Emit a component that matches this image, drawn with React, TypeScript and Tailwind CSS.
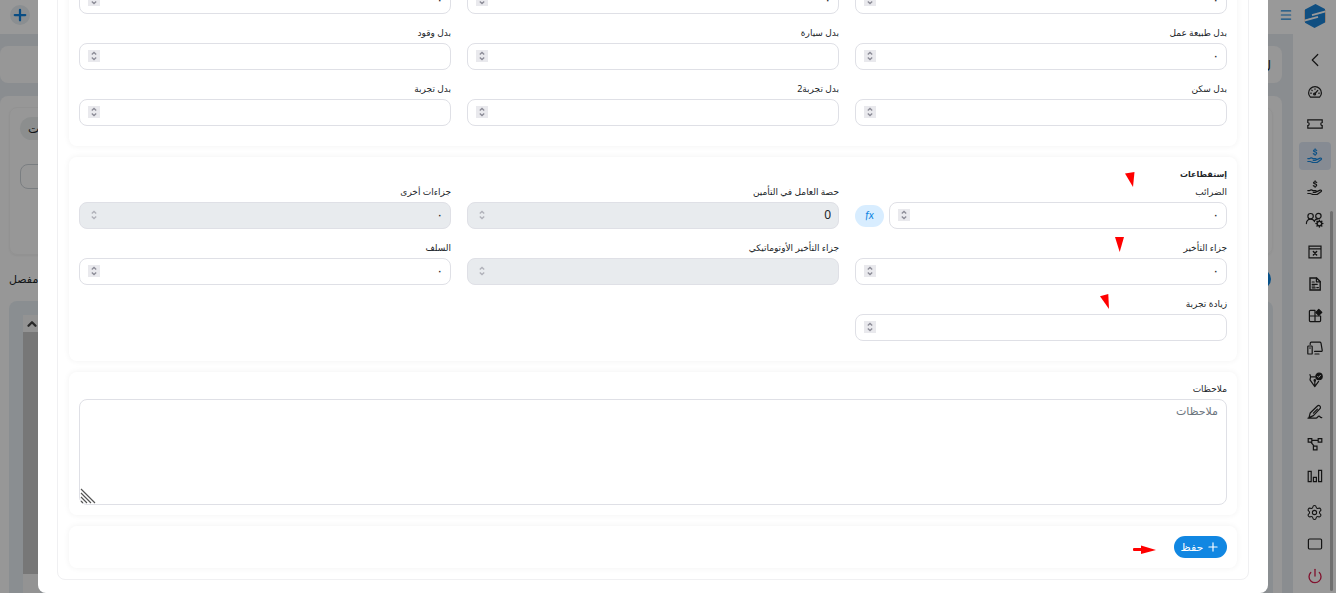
import type { ReactNode } from 'react'
import { ChevronLeft, ChevronUp, Menu, Plus, Power, Settings } from 'lucide-react'
import clsx from 'clsx'

function Svg({ children }: { children: ReactNode }) {
  return (
    <svg
      viewBox="0 0 16 16"
      className="w-4 h-4 overflow-visible"
      fill="none"
      stroke="currentColor"
      strokeWidth="1.2"
      strokeLinecap="round"
      strokeLinejoin="round"
      aria-hidden="true"
    >
      {children}
    </svg>
  )
}

function HandDollar() {
  return (
    <Svg>
      <path d="M9.7 2.4C9.2 1.9 8.6 1.8 8 1.8c-.9 0-1.5.4-1.5 1 0 1.5 3.2.8 3.2 2.4 0 .7-.7 1.1-1.6 1.1-.7 0-1.4-.2-1.8-.7M8.1.8v1M8.1 6.3v1" />
      <path d="M.8 10.6h1.8c1-.9 2.4-.8 3.4.1h2.4c1.2 0 1.2 1.6 0 1.6H6.2M9.2 11.9l4-1.8c1-.4 1.8.7 1 1.4l-3.4 2.6c-.4.3-.8.4-1.3.4H6.4c-1.4 0-2-.8-3.2-1H.8" />
    </Svg>
  )
}

function Gauge() {
  return (
    <Svg>
      <path d="M3.4 13.2h9.2c1.1-1.1 1.8-2.5 1.8-4.2a6.4 6.4 0 0 0-12.8 0c0 1.7.7 3.1 1.8 4.2Z" />
      <path d="m7.6 10 3.2-3.6M3.7 9.2h.6M4.8 6.2l.4.4M8 4.8v.5M12.3 9.2h-.6" />
      <circle cx="7.6" cy="10" r="1" />
    </Svg>
  )
}

function Ticket() {
  return (
    <Svg>
      <path
        d="M.8 3.8h14.4v2.6c-1 .2-1.4.8-1.4 1.6s.4 1.4 1.4 1.6v2.6H.8V9.6c1-.2 1.4-.8 1.4-1.6S1.8 6.6.8 6.4Z"
        strokeLinejoin="miter"
      />
    </Svg>
  )
}

function UsersCog() {
  return (
    <Svg>
      <circle cx="3.6" cy="4.2" r="2.7" />
      <circle cx="11.4" cy="4" r="2.7" />
      <path d="M-.6 11.6c0-2.6 1.6-4.4 4.2-4.4 2 0 3.3 1 3.9 2.4M7.5 8.8C8.1 7.4 9.5 6.8 11 6.8" />
      <circle cx="12.4" cy="11.6" r="2.3" />
      <path
        d="M12.4 8.2v1M12.4 14v1M9 11.6h1M14.8 11.6h1M10 9.2l.7.7M14.8 9.2l-.7.7M10 14l.7-.7M14.8 14l-.7-.7"
        strokeWidth="1.5"
      />
    </Svg>
  )
}

function WindowX() {
  return (
    <Svg>
      <path d="M2 2.2h12v11.6H2ZM2 4.8h12" strokeLinejoin="miter" />
      <path d="m6.4 7.6 3.2 3.4M9.6 7.6l-3.2 3.4" strokeWidth="1.5" />
    </Svg>
  )
}

function FileText() {
  return (
    <Svg>
      <path d="M3 2h6.6l3.6 3.6V14H3Z" strokeLinejoin="miter" strokeWidth="1.4" />
      <path d="M9.4 2v3.8h3.8M5.2 6h2M5.2 8.4h5M5.2 10h2.4M5.2 11.8h3M9.8 11.6h1.6" />
    </Svg>
  )
}

function GridPlus() {
  return (
    <Svg>
      <path d="M8 2.4H3.4c-.6 0-1 .4-1 1v9.2c0 .6.4 1 1 1h9.2c.6 0 1-.4 1-1V8H2.4M8 2.4v11.2" />
      <path d="m11.8 1.4 3 3-3 3-3-3Z" fill="currentColor" />
    </Svg>
  )
}

function Devices() {
  return (
    <Svg>
      <path d="M3.2 4.6V3.4c0-.8.4-1.2 1.2-1.2h8.4c.7 0 1 .3 1.2 1l1.2 7c.1.8-.2 1.2-1 1.2H7.6M8 14h4" />
      <rect x=".8" y="6" width="4.4" height="8" rx=".6" />
      <path d="M2.6 8h.8" />
    </Svg>
  )
}

function PenCheck() {
  return (
    <Svg>
      <path d="m3 2.6.6 2.2h4.2M3.6 4.8 3 7.8l4.8 6.8 3.8-5.2M7.8 14.4V9" />
      <circle cx="7.8" cy="8.4" r=".7" />
      <circle cx="12" cy="4.4" r="3.2" fill="currentColor" />
      <path d="m10.6 4.4 1 1 1.8-2" stroke="#ffffff" strokeWidth="1" />
    </Svg>
  )
}

function PenSign() {
  return (
    <Svg>
      <path d="M2 13.6 3.2 9l7.2-7c.6-.6 2-.4 2.600.2s.6 1.800 0 2.400l-6.600 7L2 13.600ZM6.400 9.200l4-4M1 14.200h8c1.600 0 1.600-2 3-2s.8 1.800 2.800 1.400" />
    </Svg>
  )
}

function Nodes() {
  return (
    <Svg>
      <path
        d="M1.2 2.6h3.600v3.600H1.200ZM11.200 2.600h3.600v3.600h-3.600ZM6.400 10.200H10v3.600H6.400ZM4.800 4.400h6.400M3.800 6.200l3.400 4"
        strokeLinejoin="miter"
      />
    </Svg>
  )
}

function Bars() {
  return (
    <Svg>
      <path d="M1.2 3.4h3v10.200h-3ZM6.400 9.400h3v4.200h-3ZM11.600 2.400h3v11.200h-3Z" strokeLinejoin="miter" />
    </Svg>
  )
}

function Screen() {
  return (
    <Svg>
      <rect x="1.4" y="3" width="13.2" height="10" rx="1.2" />
    </Svg>
  )
}

function Logo() {
  return (
    <svg viewBox="0 0 22 24" className="w-[22px] h-6" aria-hidden="true">
      <path d="M.5 6h2v13l-2-1ZM21.5 6h-2v12l2 .500Z" fill="#f0b48a" />
      <path d="M11.500 0 21 5v2.500L10 11.500l11-3.500v10.500L10.500 24 1 18.800v-2.300l11-4L1 16V5.500Z" fill="#1c84d8" />
      <path d="M21.500 7.300 8 11.200M.5 16.700 14 12.800" stroke="#ffffff" strokeWidth="1.8" />
    </svg>
  )
}

const NAV: { label: string; icon: ReactNode; active?: boolean }[] = [
  { label: 'رجوع', icon: <ChevronLeft size={22} strokeWidth={1.3} /> },
  { label: 'لوحة التحكم', icon: <Gauge /> },
  { label: 'التذاكر', icon: <Ticket /> },
  { label: 'الرواتب', icon: <HandDollar />, active: true },
  { label: 'المدفوعات', icon: <HandDollar /> },
  { label: 'الموظفون', icon: <UsersCog /> },
  { label: 'الغياب', icon: <WindowX /> },
  { label: 'المستندات', icon: <FileText /> },
  { label: 'التطبيقات', icon: <GridPlus /> },
  { label: 'الأجهزة', icon: <Devices /> },
  { label: 'الموافقات', icon: <PenCheck /> },
  { label: 'التوقيع', icon: <PenSign /> },
  { label: 'الهيكل', icon: <Nodes /> },
  { label: 'التقارير', icon: <Bars /> },
]

function Sidebar() {
  return (
    <aside className="relative w-[43px] shrink-0 bg-white flex flex-col items-center">
      <div className="h-[46px] pt-1">
        <Logo />
      </div>
      <nav className="flex flex-col gap-1">
        {NAV.map((n) => (
          <a
            key={n.label}
            href="#"
            aria-label={n.label}
            className={clsx(
              'w-8 h-7 rounded-sm flex items-center justify-center',
              n.active ? 'bg-[#dfe8f5] text-[#1788e0]' : 'text-[#222222]',
            )}
          >
            {n.icon}
          </a>
        ))}
      </nav>
      <div className="mt-2 flex flex-col gap-1 text-[#222222]">
        <button aria-label="الإعدادات" className="w-8 h-7 flex items-center justify-center">
          <Settings size={17} strokeWidth={1.5} />
        </button>
        <button aria-label="الشاشة" className="w-8 h-7 flex items-center justify-center">
          <Screen />
        </button>
        <button aria-label="خروج" className="w-8 h-7 flex items-center justify-center text-[#d8204f]">
          <Power size={16} strokeWidth={2} />
        </button>
      </div>
      <div className="absolute right-[3px] top-[211px] bottom-[2px] w-[3px] rounded-full bg-[#bbbbbb]" />
    </aside>
  )
}

function Backdrop() {
  return (
    <div className="h-screen flex overflow-hidden bg-[#e7ebf0]" aria-hidden="true">
      <Sidebar />
      <main className="flex-1 min-w-0 flex flex-col">
        <header className="h-[34px] shrink-0 bg-white flex items-center justify-between pl-[10px] pb-1">
          <button className="text-[#1788e0]">
            <Menu size={14} strokeWidth={2} />
          </button>
          <button className="w-5 h-5 rounded-full bg-[#e6edf2] text-[#0d7fdc] flex items-center justify-center">
            <Plus size={18} strokeWidth={3} />
          </button>
        </header>
        <div className="mt-3 h-[37px] shrink-0 mr-[11px] rounded-lg bg-[#fcfcfc] flex items-center pr-[11px] text-[12px]">
          ل
        </div>
        <div className="mt-[13px] flex-1 mr-[11px] rounded-t-lg bg-[#fcfcfc] px-[9px] pt-[11px] flex flex-col">
          <div className="h-[148px] shrink-0 rounded-lg border border-[#f3f3f3] shadow-xs px-[10px] pt-[9px] flex flex-col items-end gap-6">
            <span className="h-[23px] w-20 rounded-full bg-[#e9eded] flex items-center justify-end pl-2 text-[12px]">
              البيانات
            </span>
            <span className="h-[25px] w-40 rounded-lg border border-[#ccd2d8]" />
          </div>
          <div className="mt-[14px] h-5 shrink-0 flex items-center justify-between pr-[2px] text-[11px]">
            <span className="w-5 h-5 rounded-full bg-[#0d86e3]" />
            <span>مفصل</span>
          </div>
          <div className="mt-[12px] flex-1 rounded-t-lg bg-[#e6edf2] pt-[14px] pl-[14px] flex flex-col items-end">
            <span className="h-[17px] w-[17px] bg-[#f6f6f6] flex items-center justify-center text-[#444444]">
              <ChevronUp size={14} strokeWidth={4} />
            </span>
            <span className="h-[242px] w-[17px] bg-[#c6c6c6]" />
            <span className="flex-1 w-[17px] bg-[#f6f6f6]" />
          </div>
        </div>
      </main>
    </div>
  )
}

function Spinner({ disabled }: { disabled?: boolean }) {
  return (
    <span
      className={clsx(
        'w-3 h-3 shrink-0 flex items-center justify-center text-[#8b8b96]',
        disabled ? 'opacity-60' : 'bg-[#e9e9ed]',
      )}
    >
      <svg viewBox="0 0 12 12" className="w-3 h-3" fill="none" stroke="currentColor" strokeWidth="1.3" aria-hidden="true">
        <path d="m3.8 4.4 2.2-2 2.2 2M3.8 7.6l2.2 2 2.2-2" />
      </svg>
    </span>
  )
}

function Arrow({ points, className }: { points: string; className: string }) {
  return (
    <svg viewBox="0 0 10 15" className={clsx('absolute w-[10px] h-[15px]', className)} aria-hidden="true">
      <polygon points={points} fill="#ff0000" />
    </svg>
  )
}

type FieldProps = {
  id: string
  label: string
  value?: string
  disabled?: boolean
  formula?: boolean
  children?: ReactNode
}

function Field({ id, label, value = '', disabled, formula, children }: FieldProps) {
  return (
    <div className="relative mb-3">
      <label htmlFor={id} className="block h-[17px] leading-[14px] text-[9px]">
        {label}
      </label>
      <div className="flex items-center gap-[5px]">
        <div
          className={clsx(
            'flex-1 min-w-0 h-[27px] rounded-lg border border-[#dfe0e6] flex items-center pr-[7px] pl-2 pb-px',
            disabled ? 'bg-[#e8ebee]' : 'bg-white',
          )}
        >
          <input
            id={id}
            type="text"
            inputMode="numeric"
            defaultValue={value}
            disabled={disabled}
            className="flex-1 min-w-0 bg-transparent outline-none text-[12px] text-[#212529]"
          />
          <Spinner disabled={disabled} />
        </div>
        {formula && (
          <button
            type="button"
            className="w-[29px] h-[22px] rounded-full bg-[#d8edff] text-[#1187e2] text-[11px] italic font-['Lato',sans-serif]"
          >
            fx
          </button>
        )}
      </div>
      {children}
    </div>
  )
}

function Card({ className, children }: { className?: string; children: ReactNode }) {
  return (
    <section className={clsx('rounded-lg bg-white px-[10px] pt-[10px] shadow-[0_0_6px_rgba(0,0,0,0.06)]', className)}>
      {children}
    </section>
  )
}

export default function App() {
  return (
    <div dir="rtl" className="relative text-[#212529] font-['Noto_Sans','DejaVu_Sans',sans-serif]">
      <Backdrop />
      <div className="fixed inset-0 bg-black/40 flex items-end overflow-hidden pr-[68px] pl-[38px]">
        <form
          role="dialog"
          aria-label="الراتب"
          className="flex-1 min-w-0 rounded-lg bg-white px-[19px] pb-[13px] pt-5"
          onSubmit={(e) => e.preventDefault()}
        >
          <div className="rounded-lg border border-[#f0f0f2] px-[11px] pb-[11px] pt-3 flex flex-col gap-[11px]">
            <Card className="pb-2">
              <div className="grid grid-cols-3 gap-x-4">
                <Field id="allowance-1" label="بدل" value="٠" />
                <Field id="allowance-2" label="بدل" value="٠" />
                <Field id="allowance-3" label="بدل" value="٠" />
                <Field id="work-nature" label="بدل طبيعة عمل" value="٠" />
                <Field id="car" label="بدل سيارة" />
                <Field id="fuel" label="بدل وقود" />
                <Field id="housing" label="بدل سكن" />
                <Field id="trial-2" label="بدل تجربة2" />
                <Field id="trial" label="بدل تجربة" />
              </div>
            </Card>

            <Card className="pb-2">
              <h2 className="h-[18px] leading-[14px] text-[8px] font-bold">إستقطاعات</h2>
              <div className="grid grid-cols-3 gap-x-4">
                <Field id="taxes" label="الضرائب" value="٠" formula>
                  <Arrow points="0,1.5 9.5,0 8,15" className="right-[92px] -top-[13px]" />
                </Field>
                <Field id="insurance" label="حصة العامل في التأمين" value="0" disabled />
                <Field id="other-penalties" label="جزاءات أخرى" value="٠" disabled />
                <Field id="late" label="جزاء التأخير" value="٠">
                  <Arrow points="0,0 9,0 4.7,15" className="right-[102px] -top-[4px]" />
                </Field>
                <Field id="late-auto" label="جزاء التأخير الأوتوماتيكي" disabled />
                <Field id="advances" label="السلف" value="٠" />
                <Field id="trial-increase" label="زيادة تجربة">
                  <Arrow points="0,2.3 8.3,0 9,15" className="right-[117px] -top-[3px]" />
                </Field>
              </div>
            </Card>

            <Card className="pb-[10px]">
              <label htmlFor="notes" className="block h-[17px] leading-[14px] text-[9px]">
                ملاحظات
              </label>
              <div className="relative">
                <textarea
                  id="notes"
                  placeholder="ملاحظات"
                  className="block w-full h-[106px] resize-none rounded-lg border border-[#dfe0e6] bg-white px-2 py-1 text-[11px] leading-[14px] outline-none placeholder:text-[#6c757d]"
                />
                <svg
                  viewBox="0 0 16 16"
                  className="absolute left-[1px] bottom-[1px] w-4 h-4"
                  stroke="#555555"
                  strokeWidth="1.2"
                  aria-hidden="true"
                >
                  <path d="M1 1l14 14M1 5l10 10M1 9l6 6M1 13l2 2" />
                </svg>
              </div>
            </Card>

            <Card className="pb-[10px] flex items-center gap-[18px]">
              <button
                type="submit"
                className="h-[22px] w-[53px] rounded-full bg-[#1187e2] text-white text-[11px] flex items-center justify-center gap-[3px]"
              >
                <Plus size={14} strokeWidth={2} />
                حفظ
              </button>
              <svg viewBox="0 0 24 14" className="w-6 h-[14px]" aria-hidden="true">
                <path d="M9 5.5 24 10 9 14Z" fill="#ff0000" />
                <rect x="1" y="8" width="9" height="3" rx="1" fill="#ff0000" />
              </svg>
            </Card>
          </div>
        </form>
      </div>
    </div>
  )
}
